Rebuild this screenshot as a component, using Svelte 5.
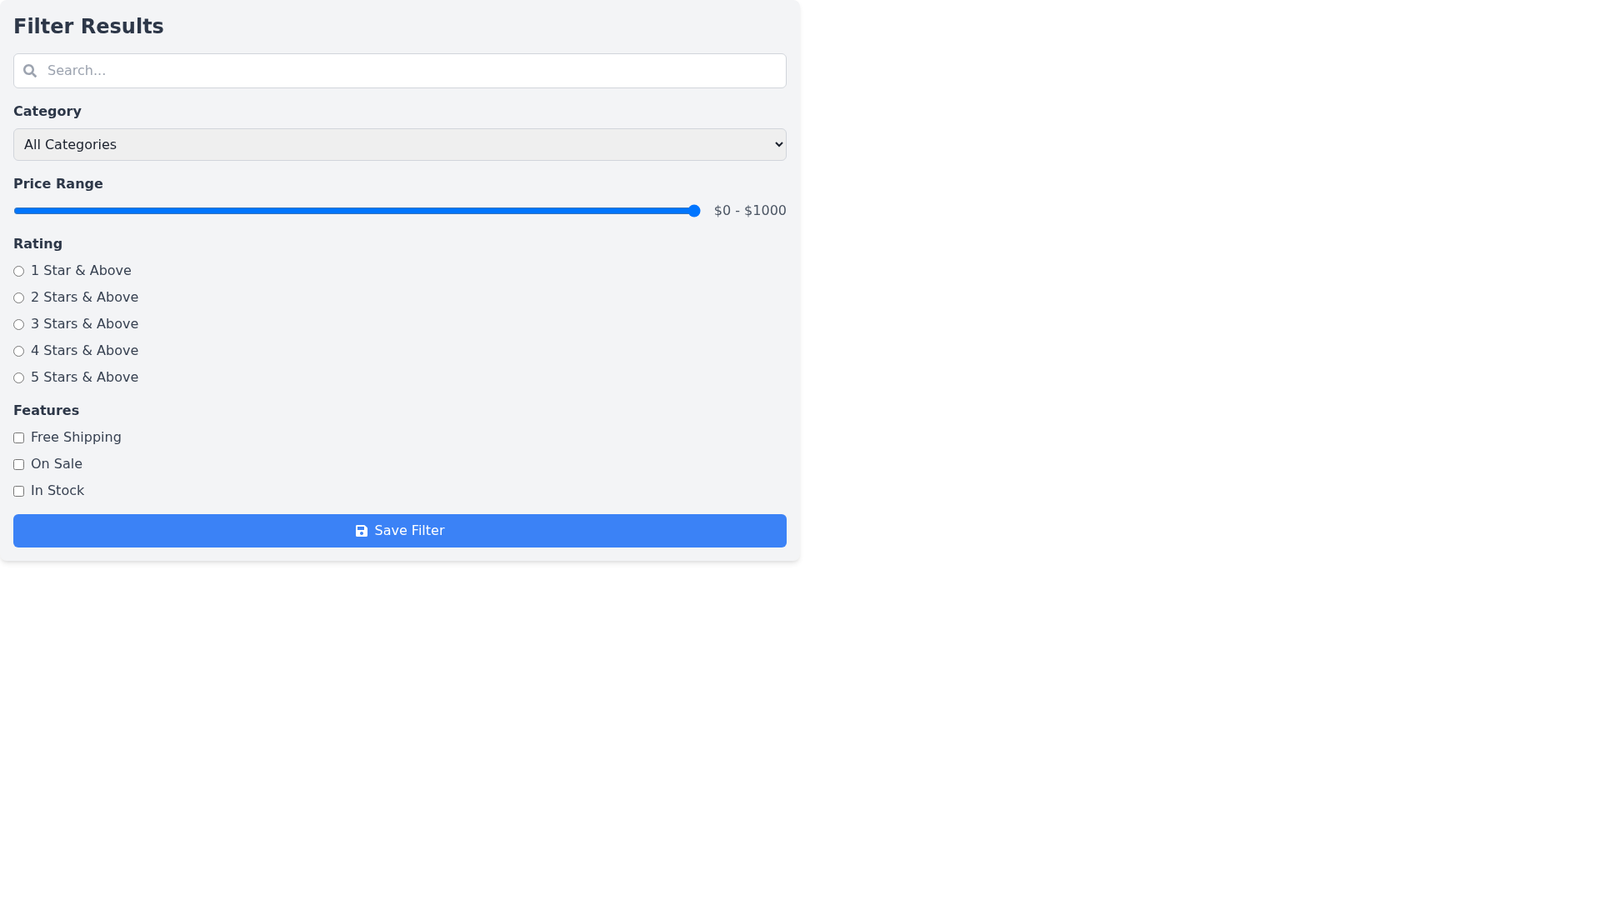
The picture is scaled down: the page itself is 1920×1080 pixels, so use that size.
<script lang="ts">
	const ratings = ['1 Star & Above', '2 Stars & Above', '3 Stars & Above', '4 Stars & Above', '5 Stars & Above'];
	const features = ['Free Shipping', 'On Sale', 'In Stock'];

	let search = $state('');
	let category = $state('all');
	let price = $state(1000);
</script>

<div class="panel">
	<h2 class="title">Filter Results</h2>

	<div class="search">
		<svg class="search-icon" viewBox="0 0 512 512" aria-hidden="true">
			<path d="M505 442.7L405.3 343c-4.5-4.5-10.6-7-17-7H372c27.6-35.3 44-79.7 44-128C416 93.1 322.9 0 208 0S0 93.1 0 208s93.1 208 208 208c48.3 0 92.7-16.4 128-44v16.3c0 6.4 2.5 12.5 7 17l99.7 99.7c9.4 9.4 24.6 9.4 33.9 0l28.3-28.3c9.4-9.4 9.4-24.6.1-34zM208 336c-70.7 0-128-57.2-128-128 0-70.7 57.2-128 128-128 70.7 0 128 57.2 128 128 0 70.7-57.2 128-128 128z" />
		</svg>
		<input class="search-input" type="text" placeholder="Search..." bind:value={search} />
	</div>

	<div class="section">
		<div class="label">Category</div>
		<select class="select" bind:value={category}>
			<option value="all">All Categories</option>
			<option value="electronics">Electronics</option>
			<option value="clothing">Clothing</option>
		</select>
	</div>

	<div class="section">
		<div class="label">Price Range</div>
		<div class="range-row">
			<input class="range" type="range" min="0" max="1000" bind:value={price} />
			<span class="range-value">$0 - ${price}</span>
		</div>
	</div>

	<div class="section">
		<div class="label">Rating</div>
		<div class="options">
			{#each ratings as rating}
				<label class="option">
					<input type="radio" name="rating" />
					<span>{rating}</span>
				</label>
			{/each}
		</div>
	</div>

	<div class="section">
		<div class="label">Features</div>
		<div class="options">
			{#each features as feature}
				<label class="option">
					<input type="checkbox" />
					<span>{feature}</span>
				</label>
			{/each}
		</div>
	</div>

	<button class="save">
		<svg class="save-icon" viewBox="0 0 448 512" aria-hidden="true">
			<path d="M433.941 129.941l-83.882-83.882A48 48 0 0 0 316.118 32H48C21.49 32 0 53.49 0 80v352c0 26.51 21.49 48 48 48h352c26.51 0 48-21.49 48-48V163.882a48 48 0 0 0-14.059-33.941zM224 416c-35.346 0-64-28.654-64-64 0-35.346 28.654-64 64-64s64 28.654 64 64c0 35.346-28.654 64-64 64zm96-304.52V212c0 6.627-5.373 12-12 12H76c-6.627 0-12-5.373-12-12V108c0-6.627 5.373-12 12-12h228.52c3.183 0 6.235 1.264 8.485 3.515l3.48 3.48A11.996 11.996 0 0 1 320 111.48z" />
		</svg>
		<span>Save Filter</span>
	</button>
</div>

<style>
	:global(body) {
		margin: 0;
		min-height: 100vh;
		background: #fff;
		font-family: 'DejaVu Sans', sans-serif;
		font-size: 16px;
		line-height: 24px;
	}

	* {
		box-sizing: border-box;
	}

	.panel {
		width: 960px;
		padding: 16px;
		background: #f3f4f6;
		border-radius: 8px;
		box-shadow:
			0 4px 6px -1px rgba(0, 0, 0, 0.1),
			0 2px 4px -1px rgba(0, 0, 0, 0.06);
		will-change: transform;
	}

	.title {
		margin: 0 0 16px;
		font-size: 24px;
		line-height: 32px;
		font-weight: 700;
		color: #2d3748;
	}

	.search {
		position: relative;
		margin-bottom: 16px;
	}

	.search-icon {
		position: absolute;
		left: 12px;
		top: 13px;
		width: 16px;
		height: 16px;
		fill: #9ca3af;
	}

	.search-input {
		display: block;
		width: 100%;
		height: 42px;
		padding: 7px 8px 9px 40px;
		border: 1px solid #d1d5db;
		border-radius: 6px;
		background: #fff;
		font: inherit;
		color: #1f2937;
		outline: none;
	}

	.search-input::placeholder {
		color: #9ca3af;
		opacity: 1;
	}

	.section {
		margin-bottom: 16px;
	}

	.label {
		margin-bottom: 8px;
		font-weight: 700;
		color: #2d3748;
	}

	.select {
		display: block;
		width: 100%;
		padding: 8px;
		border: 1px solid #d1d5db;
		border-radius: 6px;
		font-family: inherit;
		font-size: 16px;
		color: #1a202c;
	}

	.range-row {
		display: flex;
		align-items: center;
		height: 24px;
	}

	.range {
		flex: 1;
		min-width: 0;
		margin: 0 16px 0 0;
	}

	.range-value {
		color: #4b5563;
	}

	.options {
		display: flex;
		flex-direction: column;
		gap: 8px;
	}

	.option {
		display: flex;
		align-items: center;
		gap: 8px;
		color: #374151;
	}

	.option input {
		margin: 0;
	}

	.save {
		display: flex;
		align-items: center;
		justify-content: center;
		gap: 9px;
		width: 100%;
		height: 40px;
		padding: 0;
		border: 0;
		border-radius: 6px;
		background: #3b82f6;
		color: #fff;
		font: inherit;
		cursor: pointer;
	}

	.save-icon {
		width: 14px;
		height: 16px;
		fill: #fff;
	}
</style>
